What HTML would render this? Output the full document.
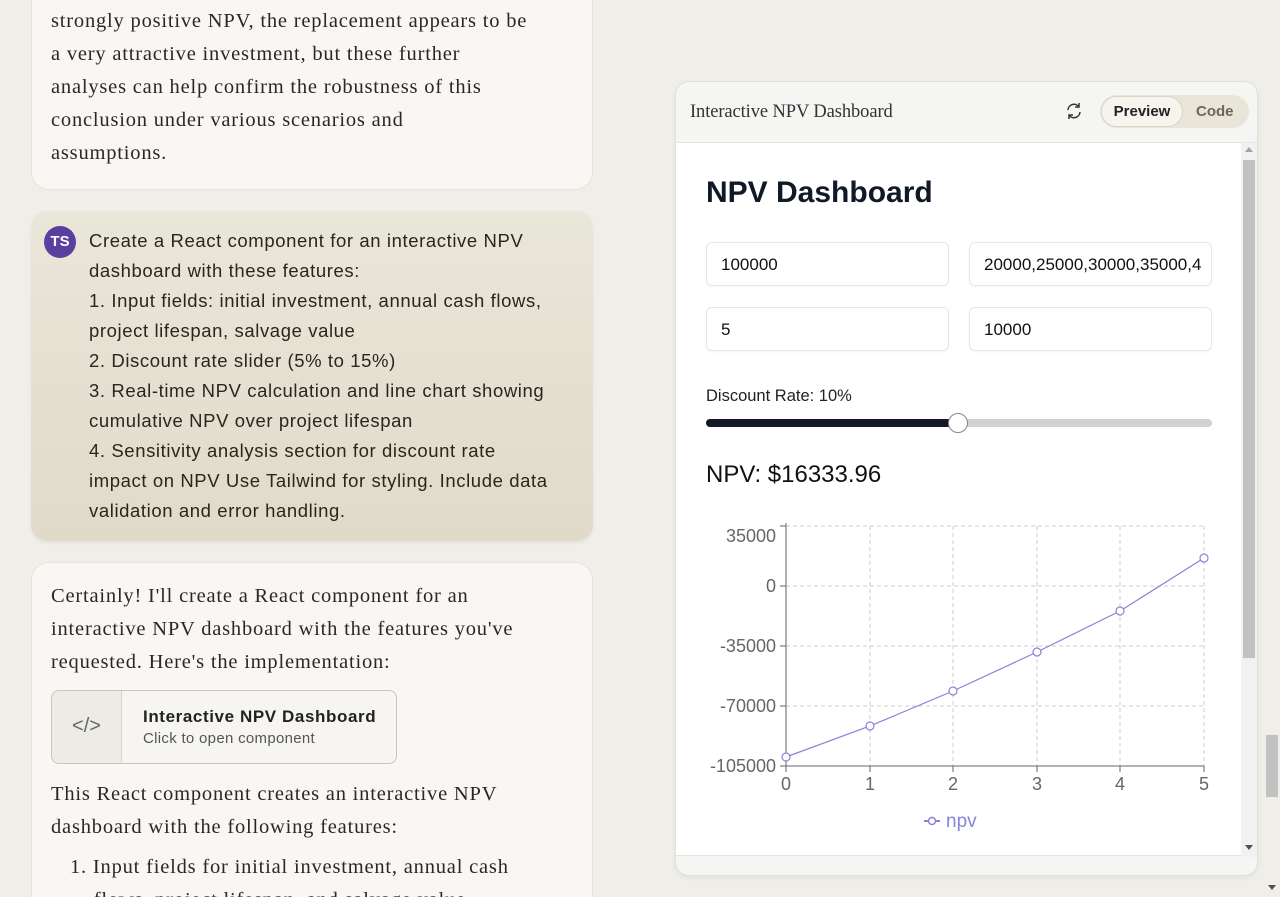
<!DOCTYPE html>
<html style="overflow:hidden;width:1280px;height:897px"><head><meta charset="utf-8"><style>
*{box-sizing:border-box;margin:0;padding:0}
body{width:1280px;height:897px;overflow:hidden;background:#f0eee8;position:relative;font-family:"Liberation Sans",sans-serif;color:#29261b}
.serif{font-family:"Liberation Serif",serif;font-size:20.5px;line-height:33px;color:#2a2822;letter-spacing:.8px;white-space:nowrap}
.card{position:absolute;left:31px;width:562px;background:#f8f7f3;border:1px solid #e6e3da;border-radius:18px;overflow:hidden}
.user{position:absolute;left:31px;top:211px;width:562px;height:330px;border-radius:16px;background:linear-gradient(#e9e6da,#e0dac9);box-shadow:0 2px 4px rgba(0,0,0,.05)}
.av{position:absolute;left:13px;top:15px;width:32px;height:32px;border-radius:50%;background:#5b3f9e;color:#fff;font-weight:bold;font-size:15px;text-align:center;line-height:32px}
.utext{position:absolute;left:58px;top:15px;font-size:18.5px;line-height:30px;color:#29261b;letter-spacing:.6px;white-space:nowrap}
.panel{position:absolute;left:675px;top:81px;width:583px;height:795px;border:1px solid #e2e0da;border-radius:14px;background:#f5f5f3;overflow:hidden;box-shadow:0 2px 6px rgba(0,0,0,.06)}
.inp{position:absolute;height:44px;width:243px;border:1px solid #e5e7eb;border-radius:6px;background:#fff;font-size:17px;line-height:44px;padding-left:14px;color:#111;box-shadow:0 1px 2px rgba(0,0,0,.04);overflow:hidden;white-space:nowrap}
</style></head><body>
<div class="card" style="top:-20px;height:210px">
<div class="serif" style="position:absolute;left:19px;top:24px">strongly positive NPV, the replacement appears to be<br>a very attractive investment, but these further<br>analyses can help confirm the robustness of this<br>conclusion under various scenarios and<br>assumptions.</div></div>
<div class="user"><div class="av">TS</div><div class="utext">Create a React component for an interactive NPV<br>dashboard with these features:<br>1. Input fields: initial investment, annual cash flows,<br>project lifespan, salvage value<br>2. Discount rate slider (5% to 15%)<br>3. Real-time NPV calculation and line chart showing<br>cumulative NPV over project lifespan<br>4. Sensitivity analysis section for discount rate<br>impact on NPV Use Tailwind for styling. Include data<br>validation and error handling.</div></div>
<div class="card" style="top:562px;height:360px">
<div class="serif" style="position:absolute;left:19px;top:17px">Certainly! I'll create a React component for an<br>interactive NPV dashboard with the features you've<br>requested. Here's the implementation:</div>
<div style="position:absolute;left:19px;top:127px;width:346px;height:74px;border:1px solid #c9c5bb;border-radius:8px;background:#f6f5f1;overflow:hidden">
<div style="position:absolute;left:0;top:0;width:70px;height:72px;background:#ecebe4;border-right:1px solid #d6d3ca;text-align:center;line-height:70px;color:#666;font-size:20px">&lt;/&gt;</div>
<div style="position:absolute;left:91px;top:16px;font-weight:bold;font-size:17px;color:#222;letter-spacing:.6px">Interactive NPV Dashboard</div>
<div style="position:absolute;left:91px;top:39px;font-size:15px;color:#555;letter-spacing:.3px">Click to open component</div></div>
<div class="serif" style="position:absolute;left:19px;top:215px">This React component creates an interactive NPV<br>dashboard with the following features:</div>
<div class="serif" style="position:absolute;left:38px;top:288px">1. Input fields for initial investment, annual cash<br>&nbsp;&nbsp;&nbsp;&nbsp;flows, project lifespan, and salvage value</div>
</div>
<div class="panel">
<div style="position:absolute;left:14px;top:20px;font-family:'Liberation Serif',serif;font-size:18.5px;color:#333;letter-spacing:-.1px">Interactive NPV Dashboard</div>
<svg style="position:absolute;left:388px;top:19px" width="20" height="20" viewBox="0 0 20 20" fill="none" stroke="#333" stroke-width="1.5"><path d="M4 9a6 6 0 0 1 11-3M16 11a6 6 0 0 1-11 3"/><path d="M15 2v4h-4M5 18v-4h4"/></svg>
<div style="position:absolute;left:424px;top:13px;width:149px;height:33px;border-radius:17px;background:#e9e6d9"></div>
<div style="position:absolute;left:425px;top:14px;width:82px;height:31px;border-radius:16px;background:#f6f4ec;border:1px solid #d8d4c8;text-align:center;line-height:29px;font-weight:bold;font-size:15px;color:#222">Preview</div>
<div style="position:absolute;left:520px;top:14px;font-weight:bold;font-size:15px;color:#6b675c;line-height:31px">Code</div>
<div style="position:absolute;left:0;top:60px;width:583px;height:714px;background:#fff;border-top:1px solid #e5e5e5;border-bottom:1px solid #e5e5e5">
<div style="position:absolute;left:565px;top:0;width:16px;height:714px;background:#f1f1f1"></div>
<div style="position:absolute;left:567px;top:17px;width:12px;height:498px;background:#c1c1c1"></div>
<div style="position:absolute;left:569px;top:4px;width:0;height:0;border-left:4px solid transparent;border-right:4px solid transparent;border-bottom:5px solid #a3a3a3"></div>
<div style="position:absolute;left:569px;top:702px;width:0;height:0;border-left:4px solid transparent;border-right:4px solid transparent;border-top:5px solid #505050"></div>
<div style="position:absolute;left:30px;top:33px;font-weight:bold;font-size:30px;color:#111827">NPV Dashboard</div>
<div class="inp" style="left:30px;top:99px">100000</div>
<div class="inp" style="left:293px;top:99px">20000,25000,30000,35000,4</div>
<div class="inp" style="left:30px;top:164px">5</div>
<div class="inp" style="left:293px;top:164px">10000</div>
<div style="position:absolute;left:30px;top:244px;font-size:16.5px;color:#222">Discount Rate: 10%</div>
<div style="position:absolute;left:30px;top:276px;width:506px;height:8px;border-radius:4px;background:#d1d1d1"></div>
<div style="position:absolute;left:30px;top:276px;width:254px;height:8px;border-radius:4px;background:#111827"></div>
<div style="position:absolute;left:272px;top:270px;width:20px;height:20px;border-radius:50%;background:#fff;border:1px solid #888"></div>
<div style="position:absolute;left:30px;top:318px;font-size:24px;color:#111">NPV: $16333.96</div>
</div>
</div>
<svg style="position:absolute;left:0;top:0" width="1280" height="897">
<g stroke="#ccc" stroke-dasharray="4 3" fill="none">
<path d="M786 526H1204M786 586H1204M786 646H1204M786 706H1204M870 526V766M953 526V766M1037 526V766M1120 526V766M1204 526V766"/></g>
<g stroke="#666" fill="none"><path d="M786 523V766H1204M780 526H786M780 586H786M780 646H786M780 706H786M780 766H786M786 766v6M870 766v6M953 766v6M1037 766v6M1120 766v6M1204 766v6"/></g>
<g font-family="Liberation Sans" font-size="18" fill="#666" text-anchor="end">
<text x="776" y="542">35000</text><text x="776" y="592">0</text><text x="776" y="652">-35000</text><text x="776" y="712">-70000</text><text x="776" y="772">-105000</text></g>
<g font-family="Liberation Sans" font-size="18" fill="#666" text-anchor="middle">
<text x="786" y="790">0</text><text x="870" y="790">1</text><text x="953" y="790">2</text><text x="1037" y="790">3</text><text x="1120" y="790">4</text><text x="1204" y="790">5</text></g>
<path d="M786 757L870 726L953 691L1037 652L1120 611L1204 558" stroke="#8884d8" stroke-width="1.2" fill="none"/>
<g fill="#fff" stroke="#8884d8" stroke-width="1.2"><circle cx="786" cy="757" r="4"/><circle cx="870" cy="726" r="4"/><circle cx="953" cy="691" r="4"/><circle cx="1037" cy="652" r="4"/><circle cx="1120" cy="611" r="4"/><circle cx="1204" cy="558" r="4"/></g>
<path d="M924 821H940" stroke="#8884d8" stroke-width="2"/><circle cx="932" cy="821" r="3.5" fill="#fff" stroke="#8884d8" stroke-width="1.5"/>
<text x="946" y="827" font-family="Liberation Sans" font-size="19" fill="#8884d8">npv</text>
</svg>
<div style="position:absolute;left:1264px;top:0;width:16px;height:897px;background:#f0eee8"></div>
<div style="position:absolute;left:1266px;top:735px;width:12px;height:62px;background:#c1c1c1"></div>
<div style="position:absolute;left:1268px;top:885px;width:0;height:0;border-left:4px solid transparent;border-right:4px solid transparent;border-top:5px solid #505050"></div>
</body></html>
